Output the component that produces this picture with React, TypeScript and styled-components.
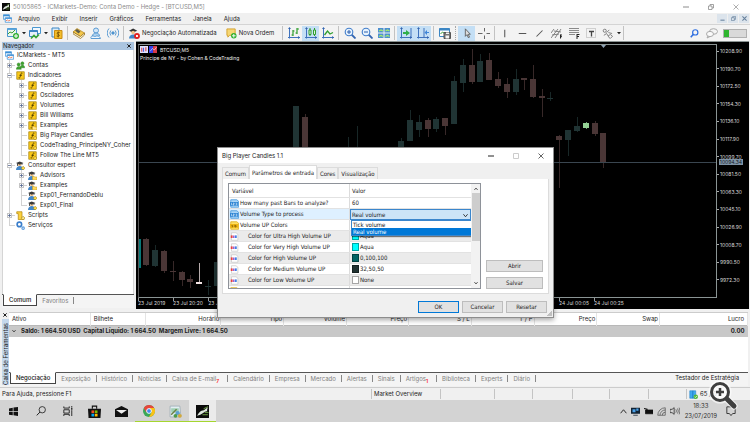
import React from 'react';
import styled, { createGlobalStyle, css } from 'styled-components';

const UI = `Inter, "Open Sans", sans-serif`;
const DLG = `"DejaVu Sans Condensed", "DejaVu Sans", sans-serif`;

const Global = createGlobalStyle`
  * { box-sizing: border-box; }
  body { margin: 0; background: #f0f0f0; font: 6px/10px ${UI}; color: #1c1c1c; }
  button, select { font: inherit; color: inherit; margin: 0; padding: 0; border: 0; background: none; }
  ul { list-style: none; margin: 0; padding: 0; }
  svg { display: block; flex: none; }
`;

/* ---------- frame ---------- */
const Desktop = styled.div`
  position: relative;
  display: flex;
  flex-direction: column;
  min-height: 100vh;
  overflow: hidden;
`;
const TitleBar = styled.header`
  display: flex;
  align-items: center;
  gap: 3px;
  height: 13px;
  padding: 0 2px;
  background: #fff;
  color: #8c8c8c;
`;
const TitleText = styled.h1`
  flex: 1;
  margin: 0;
  font-size: inherit;
  font-weight: 400;
`;
const WindowButtons = styled.div`
  display: flex;
`;
const CaptionButton = styled.button<{ $dark?: boolean; $faint?: boolean }>`
  display: grid;
  place-items: center;
  width: 25px;
  height: 12px;
  color: ${(p) => (p.$faint ? '#ccc' : p.$dark ? '#222' : '#8c8c8c')};
`;
const MenuBar = styled.nav`
  display: flex;
  align-items: center;
  gap: 12px;
  height: 11px;
  padding: 0 1px 0 3px;
  background: #f0f0f0;
`;
const MenuIcon = styled.span`
  width: 10px;
  margin-right: -7px;
`;
const MenuItem = styled.button``;
const MdiControls = styled.div`
  display: flex;
  gap: 1px;
  margin-left: auto;
`;
const MdiButton = styled.button`
  display: grid;
  place-items: center;
  width: 10px;
  height: 9px;
  background: #dce4ec;
  color: #67809c;
`;
const Toolbar = styled.div`
  display: flex;
  align-items: center;
  height: 17px;
  padding: 0 3px 0 4px;
  background: #f3f3f3;
  border-top: 1px solid #d4d4d4;
`;
const ToolButton = styled.button<{ $on?: boolean }>`
  display: grid;
  place-items: center;
  width: 17px;
  height: 15px;
  flex: none;
  background: ${(p) => (p.$on ? '#c4dff5' : 'transparent')};
`;
const ArrowButton = styled.button`
  display: grid;
  place-items: center;
  width: 5px;
  height: 15px;
`;
const TextButton = styled.button`
  display: flex;
  align-items: center;
  gap: 2px;
  padding: 0 6px 0 3px;
  white-space: nowrap;
`;
const Separator = styled.span<{ $grip?: boolean }>`
  width: 1px;
  height: 14px;
  margin: 0 2px;
  ${(p) => (p.$grip ? 'border-left: 1px dotted #a8a8a8;' : 'background: #c2c2c2;')}
`;
const ToolbarEnd = styled.div`
  display: flex;
  align-items: center;
  margin-left: auto;
`;
const Battery = styled.span`
  width: 24px;
  height: 9px;
  margin-left: 3px;
  border: 1px solid #b0b0b0;
  background: linear-gradient(90deg, #2fb52f 5px, #d9d9d9 5px);
`;

/* ---------- navigator ---------- */
const Main = styled.main`
  display: flex;
  flex: 1;
`;
const Navigator = styled.aside`
  display: flex;
  flex-direction: column;
  flex: none;
  width: 136px;
  padding: 1px 2px 0 2px;
  background: #f0f0f0;
`;
const PanelTitle = styled.div`
  display: flex;
  justify-content: space-between;
  align-items: center;
  height: 8px;
  padding: 0 2px 0 1px;
  background: #abc5e0;
  line-height: 8px;
`;
const CloseButton = styled.button`
  display: grid;
  place-items: center;
  width: 6px;
  height: 6px;
`;
const Tree = styled.ul`
  flex: 1;
  padding-left: 2px;
  background: #fff;
  border-left: 1px solid #d5d5d5;
  border-right: 1px solid #d5d5d5;
`;
const Branch = styled.ul<{ $root?: boolean }>`
  margin-left: ${(p) => (p.$root ? 4 : 12)}px;
`;
const Node = styled.li`
  position: relative;
  &::before {
    content: '';
    position: absolute;
    left: 0;
    top: 0;
    bottom: 0;
    border-left: 1px solid #d2d2d2;
  }
  &:last-child::before {
    bottom: auto;
    height: 5px;
  }
`;
const NodeRow = styled.div<{ $child?: boolean }>`
  position: relative;
  display: flex;
  align-items: center;
  gap: 3px;
  height: 10px;
  overflow: hidden;
  white-space: nowrap;
  ${(p) =>
    p.$child &&
    css`
      margin-left: -2px;
      &::before {
        content: '';
        width: 6px;
        margin-left: 2px;
        margin-right: -2px;
        border-top: 1px solid #d2d2d2;
      }
    `}
`;
const ToggleHolder = styled.span`
  position: absolute;
  left: -2px;
  top: 0;
`;
const Toggle = styled.button`
  position: absolute;
  left: 0;
  top: 3px;
  display: grid;
  place-items: center;
  width: 5px;
  height: 5px;
  background: #fff;
  color: #4a5d8a;
  outline: 1px solid #c5c5c5;
  outline-offset: -1px;
`;
const SheetTabs = styled.div`
  display: flex;
  align-items: flex-start;
  height: 14px;
  margin-bottom: 1px;
  border-top: 1px solid #555;
  background: #f4f4f4;
  color: #808080;
`;
const SheetTab = styled.button<{ $on?: boolean }>`
  height: 12px;
  padding: 0 5px;
  white-space: nowrap;
  ${(p) =>
    p.$on &&
    css`
      margin-top: -1px;
      margin-left: 1px;
      background: #fff;
      color: #111;
      border: 1px solid #444;
      border-top-color: #fff;
      font-weight: 500;
    `}
`;
const TabRule = styled.span`
  height: 7px;
  margin-top: 2px;
  border-left: 1px solid #888;
`;
const Count = styled.sub`
  padding-right: 3px;
  color: #f22;
  font-size: 5px;
  font-weight: 600;
  line-height: 5px;
`;

/* ---------- chart ---------- */
const ChartPane = styled.section`
  position: relative;
  display: grid;
  grid-template-columns: 1fr 32px;
  grid-template-rows: 1fr 11px;
  flex: 1;
  margin-right: 1px;
  padding: 2px 0 0 2px;
  background: #000;
  border-top: 1px solid #8b9392;
  color: #d8d8d8;
  font-size: 5px;
  line-height: 6px;
`;
const Plot = styled.div`
  position: relative;
  border: 1px solid #8a9494;
  border-left-color: #555;
  overflow: hidden;
`;
const PlotCaption = styled.div`
  position: absolute;
  left: 1px;
  top: 1px;
  display: grid;
  gap: 2px;
  color: #eee;
`;
const Symbol = styled.div`
  display: flex;
  align-items: center;
  gap: 1px;
`;
const SymbolText = styled.span`
  padding-left: 2px;
`;
const PriceAxis = styled.div`
  display: flex;
  flex-direction: column;
  justify-content: space-between;
  padding: 4px 0 15px;
`;
const Price = styled.span`
  display: flex;
  align-items: center;
  gap: 1px;
  &::before {
    content: '';
    width: 2px;
    border-top: 1px solid #aaa;
  }
`;
const CurrentPrice = styled.output`
  position: absolute;
  right: 6px;
  top: 117px;
  padding: 0 1px;
  background: #7f93a6;
  color: #10181f;
`;
const TimeAxis = styled.div`
  display: grid;
  grid-template-columns: repeat(14, 6.06%);
  white-space: nowrap;
`;
const Time = styled.span`
  position: relative;
  padding-top: 2px;
  &::before {
    content: '';
    position: absolute;
    left: 0;
    top: 0;
    height: 3px;
    border-left: 1px solid #999;
  }
`;

/* ---------- toolbox ---------- */
const Toolbox = styled.section`
  display: flex;
  height: 78px;
  padding: 3px 2px 0 1px;
  background: #f0f0f0;
`;
const ToolboxGrip = styled.div`
  display: flex;
  flex-direction: column;
  align-items: center;
  width: 8px;
`;
const ToolboxName = styled.span`
  flex: 1;
  width: 7px;
  margin: 1px 0 2px;
  background: #c4d8ec;
  writing-mode: vertical-rl;
  transform: rotate(180deg);
  line-height: 7px;
  white-space: nowrap;
`;
const ToolboxBody = styled.div`
  display: flex;
  flex-direction: column;
  flex: 1;
  border-top: 1px solid #ccc;
`;
const TableArea = styled.div`
  flex: 1;
  background: #fff;
`;
const Positions = styled.table`
  width: 100%;
  table-layout: fixed;
  border-collapse: collapse;
`;
const HeadCell = styled.th<{ $w: number; $left?: boolean }>`
  width: ${(p) => p.$w}%;
  height: 12px;
  padding: 0 1px 0 3px;
  font-weight: 400;
  text-align: ${(p) => (p.$left ? 'left' : 'right')};
  border-right: 1px solid #e4e4e4;
  &:last-child {
    padding-right: 3px;
  }
`;
const BalanceCell = styled.td<{ $right?: boolean }>`
  height: 12px;
  padding: 0 3px;
  background: #c8c8c8;
  border-top: 1px solid #b8b8b8;
  font-weight: 700;
  white-space: pre;
  text-align: ${(p) => (p.$right ? 'right' : 'left')};
`;
const Balance = styled.span`
  display: flex;
  align-items: center;
  gap: 5px;
`;
const Tester = styled.a`
  margin-left: auto;
  padding-right: 9px;
  color: #222;
  text-decoration: none;
`;

/* ---------- status and taskbar ---------- */
const StatusBar = styled.footer`
  display: grid;
  grid-template-columns: 371fr 69fr 54fr 38fr 40fr 37fr 39fr 38fr 64fr;
  height: 13px;
  padding: 1px 0;
  border-top: 1px solid #ccc;
  background: #f0f0f0;
`;
const StatusCell = styled.span<{ $first?: boolean }>`
  display: flex;
  align-items: center;
  gap: 2px;
  padding-left: 2px;
  border-left: ${(p) => (p.$first ? 0 : 1)}px solid #c4c4c4;
  white-space: nowrap;
`;
const Taskbar = styled.footer`
  display: flex;
  height: 22px;
  background: #d3d3d3;
`;
const TaskButton = styled.button<{ $state?: 'open' | 'active' }>`
  display: grid;
  place-items: center;
  width: 27px;
  border-bottom: 1px solid ${(p) => (p.$state ? '#a5d62f' : 'transparent')};
  border-top: 1px solid transparent;
  background: ${(p) => (p.$state === 'active' ? '#ebebeb' : 'transparent')};
`;
const Tray = styled.div`
  display: flex;
  align-items: center;
  gap: 4px;
  margin-left: auto;
  padding-right: 14px;
`;
const Clock = styled.time`
  padding: 0 5px 0 1px;
  text-align: center;
  white-space: pre;
  color: #333;
`;
const Magnifier = styled.button`
  position: absolute;
  right: 12px;
  bottom: 12px;
`;

/* ---------- dialog ---------- */
const Dialog = styled.section`
  position: absolute;
  left: 217px;
  top: 147px;
  width: 337px;
  background: #f0f0f0;
  border: 1px solid #8d8d8d;
  box-shadow: 0 2px 5px rgba(0, 0, 0, 0.35);
  font-family: ${DLG};
`;
const DialogTitle = styled.div`
  display: flex;
  align-items: center;
  height: 15px;
  padding-left: 4px;
  background: #fff;
  font-family: ${UI};
`;
const DialogBody = styled.div`
  padding: 2px 4px 4px;
`;
const DialogTabs = styled.div`
  display: flex;
  align-items: flex-end;
`;
const DialogTab = styled.button<{ $on?: boolean }>`
  height: ${(p) => (p.$on ? 14 : 12)}px;
  padding: 0 2px;
  border: 1px solid #dcdcdc;
  border-bottom: 0;
  background: ${(p) => (p.$on ? '#fff' : '#f0f0f0')};
`;
const Page = styled.div`
  display: flex;
  gap: 5px;
  padding: 4px 5px;
  background: #fff;
  border: 1px solid #dcdcdc;
  border-top: 0;
`;
const ListBox = styled.div`
  display: flex;
  flex: 1;
  height: 106px;
  border: 1px solid #8e9299;
`;
const Params = styled.div`
  flex: 1;
  overflow: hidden;
`;
const ParamRow = styled.div<{ $tone?: 'head' | 'picked' | 'alt' }>`
  position: relative;
  display: grid;
  grid-template-columns: 1fr 1fr;
  height: ${(p) => (p.$tone === 'head' ? 14 : 11)}px;
  align-items: stretch;
  background: ${(p) => (p.$tone === 'picked' ? '#def0ff' : p.$tone === 'alt' ? '#ebebeb' : '#fff')};
  border-bottom: 1px solid #e2e2e2;
`;
const NameCell = styled.span<{ $head?: boolean }>`
  display: flex;
  align-items: center;
  gap: 1px;
  padding-left: ${(p) => (p.$head ? 3 : 1)}px;
  border-right: 1px solid #dcdcdc;
  white-space: nowrap;
`;
const Indented = styled.span`
  padding-left: 8px;
`;
const ValueCell = styled.span`
  display: flex;
  align-items: center;
  gap: 1px;
  padding-left: 2px;
`;
const Swatch = styled.i<{ $c: string }>`
  width: 7px;
  height: 8px;
  background: ${(p) => p.$c};
  border: 1px solid rgba(0, 0, 0, 0.35);
`;
const Combo = styled.div`
  position: relative;
  display: flex;
  margin-bottom: -1px;
  background: #cce4f7;
  border: 1px solid #3b86cc;
  & > svg {
    position: absolute;
    right: 2px;
    top: 3px;
  }
`;
const ComboSelect = styled.select`
  appearance: none;
  width: 100%;
  padding: 0 1px;
  line-height: 9px;
`;
const Options = styled.ul`
  position: absolute;
  z-index: 1;
  right: -1px;
  top: 11px;
  width: 50%;
  background: #fff;
  border: 1px solid #3b86cc;
  box-shadow: 1px 1px 1px rgba(0, 0, 0, 0.5);
`;
const Option = styled.li<{ $on?: boolean }>`
  padding-left: 1px;
  line-height: 7px;
  height: 7px;
  background: ${(p) => (p.$on ? '#0078d7' : '#fff')};
  color: ${(p) => (p.$on ? '#fff' : '#111')};
`;
const ScrollBar = styled.div`
  display: flex;
  flex-direction: column;
  align-items: center;
  gap: 2px;
  width: 9px;
  padding: 3px 0;
  background: #f2f2f2;
`;
const Thumb = styled.span`
  width: 8px;
  height: 48px;
  margin-bottom: auto;
  background: #cdcdcd;
`;
const SideButtons = styled.div`
  display: flex;
  flex-direction: column;
  justify-content: flex-end;
  gap: 5px;
  width: 57px;
`;
const PushButton = styled.button<{ $default?: boolean }>`
  height: 12px;
  min-width: 41px;
  background: #e1e1e1;
  border: 1px solid ${(p) => (p.$default ? '#0078d7' : '#bdbdbd')};
`;
const Actions = styled.div`
  display: flex;
  justify-content: flex-end;
  gap: 3px;
  padding: 7px 2px 0 0;
`;
const Grip = styled.span`
  position: absolute;
  right: 1px;
  bottom: 1px;
  width: 5px;
  height: 5px;
  background: linear-gradient(135deg, transparent 50%, #c0c0c0 50%);
`;

/* ---------- icons ---------- */
type IconProps = { s?: number; w?: number; children: React.ReactNode };
const Icon = ({ s = 11, w, children }: IconProps) => (
  <svg width={w ?? s} height={s} viewBox={`0 0 ${w ? (w * 12) / s : 12} 12`} fill="none" stroke="currentColor" aria-hidden="true">
    {children}
  </svg>
);
const Cross = ({ s = 6, sw = 1.4 }: { s?: number; sw?: number }) => (
  <Icon s={s}><path d="M1 1l10 10M11 1L1 11" strokeWidth={sw} /></Icon>
);
const Down = ({ s = 4 }: { s?: number }) => (
  <Icon s={s}><path d="M0 3h12L6 10z" fill="#222" stroke="none" /></Icon>
);
const Chevron = ({ up, s = 5 }: { up?: boolean; s?: number }) => (
  <Icon s={s}><path d={up ? 'M1 9l5-6 5 6' : 'M1 3l5 6 5-6'} strokeWidth="2" /></Icon>
);
const MinIcon = () => <Icon s={6}><path d="M0 6h12" strokeWidth="2" /></Icon>;
const MaxIcon = () => <Icon s={6}><path d="M1 1h10v10H1z" strokeWidth="2" /></Icon>;
const RestoreIcon = ({ s = 6 }: { s?: number }) => (
  <Icon s={s}><path d="M1 4h7v7H1zM4 4V1h7v7H8" strokeWidth="1.6" /></Icon>
);
const Mt5Icon = ({ s = 8 }: { s?: number }) => (
  <Icon s={s}>
    <path d="M0 0h12v12H0z" fill="#0a0a0a" stroke="none" />
    <path d="M1 10c1-2 3-5 5-5 2 0 3-2 5-3-1 3-1 3 0 4-3-1-5 3-10 4z" fill="#dfe8df" stroke="none" />
    <path d="M7 3.500l4-2M8 7h3.500M6 9h5" stroke="#78b54a" strokeWidth=".8" />
  </Icon>
);
const WindowsIcon = ({ s = 9 }: { s?: number }) => (
  <Icon s={s}>
    <path d="M.5 1h8v6h-8z" fill="#e9f4fd" stroke="#3c8fd6" />
    <path d="M.5 1h8v2h-8z" fill="#3c8fd6" stroke="none" />
    <path d="M3 5h8.500v6H3z" fill="#fff" stroke="#3c8fd6" />
    <path d="M3 5h8.500v1.500H3z" fill="#3c8fd6" stroke="none" />
    <path d="M4 9l2-1 1.500 1L10 8" stroke="#e0603a" />
  </Icon>
);
const PlusBadge = ({ x = 9, y = 9 }: { x?: number; y?: number }) => (
  <>
    <circle cx={x} cy={y} r="3" fill="#2fae2f" stroke="none" />
    <path d={`M${x - 2} ${y}h4M${x} ${y - 2}v4`} stroke="#fff" />
  </>
);
const NewChart = () => (
  <Icon s={12}>
    <path d="M.5 1.500h9v8h-9z" fill="#eaf7ea" stroke="#4a97cf" />
    <path d="M.5 1.500h9V3h-9z" fill="#5ba6dd" stroke="none" />
    <path d="M1 7l2-2 2 1 3-3" stroke="#3aa03a" />
    <PlusBadge />
  </Icon>
);
const Profiles = () => (
  <Icon s={12}>
    <path d="M3.500.5h8v6h-8z" fill="#f1f8fe" stroke="#4a97cf" />
    <path d="M.5 3.500h8v6h-8z" fill="#e6f1fb" stroke="#3c86c4" />
    <path d="M.5 3.500h8V5h-8z" fill="#3c86c4" stroke="none" />
    <path d="M2 11.500l3-3 2 2 3-3" stroke="#37a637" strokeWidth="1.600" />
  </Icon>
);
const MarketWatch = () => (
  <Icon s={12}>
    <path d="M1 1h7v9H1z" fill="#d9ecfa" stroke="#3c86c4" />
    <path d="M3.500 3.500h7.500v8H3.500z" fill="#f3bd2a" stroke="#c98c12" />
    <path d="M8.700 5.500c-3-1-3 1.500-1.400 2s1.400 2.500-1.600 1.500M7.200 4.500v6" stroke="#6b4700" strokeWidth=".8" />
  </Icon>
);
const BookIcon = () => (
  <Icon s={12}>
    <path d="M0 5l4-3.500L11.500 6 7.500 9.500z" fill="#f3c649" stroke="#b5851b" strokeWidth=".7" />
    <path d="M0 5v1.800l7.500 4.700L11.500 8V6L7.500 9.500z" fill="#fff3cf" stroke="#8a6510" strokeWidth=".7" />
    <path d="M2 3.500l3.500 3 2-2L4 2z" fill="#5c5c4c" stroke="none" />
  </Icon>
);
const CloudUser = () => (
  <Icon s={12}>
    <circle cx="6" cy="3.500" r="2.500" fill="#d3e7f8" stroke="#5b9bd3" />
    <path d="M2.500 9c0-4 7-4 7 0" fill="#a9cfee" stroke="#5b9bd3" />
    <path d="M1 11.500c-1-3 3-3 4-1.500 1-2 5-1 5.500 1.500z" fill="#eef6fd" stroke="#5b9bd3" />
  </Icon>
);
const Signal = () => (
  <Icon s={12}>
    <g stroke="#4d93cf">
      <circle cx="6" cy="6" r="1.200" fill="#4d93cf" />
      <path d="M3.800 3.500a4 4 0 000 5M8.200 3.500a4 4 0 010 5M2 1.500a6.500 6.500 0 000 9M10 1.500a6.500 6.500 0 010 9" strokeWidth=".9" />
    </g>
  </Icon>
);
const AutoTrade = () => (
  <Icon s={11}>
    <path d="M0 3l4.500-2.500L9 3 4.500 5z" fill="#333" stroke="none" />
    <circle cx="4.500" cy="5" r="2" fill="#f0c48a" stroke="none" />
    <path d="M0 11.500c0-6 9-6 9 0z" fill="#3f86c8" stroke="none" />
    <circle cx="8.700" cy="8.700" r="3.200" fill="#e02020" stroke="none" />
    <path d="M7.700 7.700h2v2h-2z" fill="#fff" stroke="none" />
  </Icon>
);
const NewOrder = () => (
  <Icon s={11}>
    <path d="M1 1h9v7H4l-2 2V8H1z" fill="#f7d774" stroke="#d1a02c" />
    <PlusBadge x={8.5} y={8.5} />
  </Icon>
);
const Axes = ({ children }: { children: React.ReactNode }) => (
  <Icon s={12}>
    <path d="M1.500 1v10.500M0 10.500h12" stroke="#3f72bd" />
    <path d="M0 2l1.500-2L3 2zM10 9l2 1.500-2 1.500z" fill="#3465b0" stroke="none" />
    {children}
  </Icon>
);
const ZoomGlass = ({ plus }: { plus?: boolean }) => (
  <Icon s={12}>
    <path d="M7.500 7.500l4 4" stroke="#3465b0" strokeWidth="1.800" />
    <circle cx="5" cy="5" r="3.800" fill="#e8f3fd" stroke="#3f7ccb" strokeWidth="1.100" />
    <path d={plus ? 'M3 5h4M5 3v4' : 'M3 5h4'} stroke="#2b5fae" />
  </Icon>
);
const TileIcon = () => (
  <Icon s={12}>
    <path d="M0 1h5.500v4.500H0zM6.500 1H12v4.500H6.500zM0 6.500h5.500V11H0zM6.500 6.500H12V11H6.500z" fill="#4d8fd0" stroke="none" />
    <path d="M1 4l2-1 2 1M7.500 4l2-1 2 1M1 9.500l2-1 2 1M7.500 9.500l2-1 2 1" stroke="#a6ef6a" strokeWidth="1.200" />
  </Icon>
);
const TemplateIcon = () => (
  <Icon s={12}>
    <path d="M.5 1.500h10v8H.5z" fill="#fff" stroke="#3c86c4" />
    <path d="M.5 1.500h10v2H.5z" fill="#3c86c4" stroke="none" />
    <path d="M1.500 7l2-2 2 1.500" stroke="#39a039" />
    <path d="M5 5.500h6.500v6H5z" fill="#777" stroke="#555" />
    <path d="M6.500 8.500h3.500v3H6.500zM7 5.500h3v1.500H7z" fill="#f2f2f2" stroke="none" />
  </Icon>
);
const FxIcon = ({ badge }: { badge?: 'folder' | 'leaf' }) => (
  <Icon s={9}>
    <path d="M1 1h10v10H1z" fill="#fbc918" stroke="#a88514" />
    <path d="M8.500 3C6.500 2 6.500 4 6 6s-.5 4-2.500 3M4.500 5.700h3.500" stroke="#3d3000" strokeWidth="1.100" />
    {badge === 'folder' && <path d="M6 7h2l1 1h3v4H6z" fill="#ffe58a" stroke="#c79a1b" strokeWidth=".7" />}
    {badge === 'leaf' && <path d="M9.500 7l2.500 2.500L9.500 12 7 9.500z" fill="#ffdd4a" stroke="#9a7a12" strokeWidth=".8" />}
  </Icon>
);
const ExpertIcon = ({ badge }: { badge?: 'folder' | 'leaf' }) => (
  <Icon s={9}>
    <circle cx="5" cy="5" r="2.300" fill="#efc08a" stroke="none" />
    <path d="M0 2.500L5 .5l5 2-5 2.500z" fill="#3a3a3a" stroke="none" />
    <path d="M2 3v3.500M8 3v2" stroke="#3a3a3a" strokeWidth="1.200" />
    <path d="M0 12c0-7 10-7 10 0z" fill="#4287c9" stroke="none" />
    {badge === 'folder' && <path d="M6 7h2l1 1h3v4H6z" fill="#ffd95e" stroke="#c79a1b" strokeWidth=".7" />}
    {badge !== 'folder' && <path d="M9.500 7l2.500 2.500L9.500 12 7 9.500z" fill="#ffdd4a" stroke="#9a7a12" strokeWidth=".8" />}
  </Icon>
);
const AccountsIcon = () => (
  <Icon s={9}>
    <g fill="#3fa52f" stroke="#2b7a20" strokeWidth=".6">
      <circle cx="8.500" cy="3" r="2" /><path d="M5.500 9c0-5 6-5 6 0z" />
      <circle cx="3.500" cy="4.500" r="2" /><path d="M.5 11c0-5 6.500-5 6.500 0z" />
    </g>
  </Icon>
);
const ScriptIcon = () => (
  <Icon s={9}>
    <path d="M1 1h7v8h2.500v2.500H3V3.500H1z" fill="#fcd13c" stroke="#b68a14" />
    <path d="M9.500 7l2.500 2.500L9.500 12 7 9.500z" fill="#ffe88a" stroke="#9a7a12" strokeWidth=".8" />
  </Icon>
);
const GearsIcon = () => (
  <Icon s={9}>
    <circle cx="4.500" cy="4.500" r="3" stroke="#3b7ecb" strokeWidth="2.200" />
    <circle cx="9.500" cy="9.500" r="1.600" stroke="#5a9ade" strokeWidth="1.600" />
  </Icon>
);
const ParamIcon = ({ kind }: { kind: 'int' | 'text' | 'color' }) => (
  <Icon s={9}>
    {kind === 'int' && (
      <>
        <path d="M1 1h8l2.500 2v8H1z" fill="#a9d5f7" stroke="#3d92d8" />
        <path d="M0 4h11v5H0z" fill="#2e86d4" stroke="none" />
        <path d="M2 5v3M4 5.500h1.500v1.300H4v1.200h1.600M7.500 5.500H9v2.500H7.500" stroke="#fff" strokeWidth=".7" />
      </>
    )}
    {kind === 'text' && (
      <>
        <path d="M1 1h8l2.500 2v8H1z" fill="#ffdf62" stroke="#dba80f" />
        <path d="M0 4h11v5H0z" fill="#efb512" stroke="none" />
        <path d="M2 6h1.500v2H2.200M6.500 5v3h1.600V6.200H6.500" stroke="#6b4d00" strokeWidth=".8" />
      </>
    )}
    {kind === 'color' && (
      <>
        <path d="M2 1h6l2.500 2v8H2z" fill="#fff" stroke="#c9c9c9" />
        <path d="M1 4.500h2.500v3.500H1z" fill="#e64040" stroke="none" />
        <path d="M4 4.500h2v3.500H4z" fill="#a060d0" stroke="none" />
        <path d="M6.500 4.500H9v3.500H6.500z" fill="#4080e6" stroke="none" />
      </>
    )}
  </Icon>
);

/* ---------- data ---------- */
const menu = ['Arquivo', 'Exibir', 'Inserir', 'Gráficos', 'Ferramentas', 'Janela', 'Ajuda'];

type Item = { name: string; icon: React.ReactNode; state?: '+' | '-'; kids?: Item[] };
const tree: Item[] = [
  { name: 'Contas', icon: <AccountsIcon />, state: '+' },
  {
    name: 'Indicadores', icon: <FxIcon />, state: '-', kids: [
      { name: 'Tendência', icon: <FxIcon />, state: '+' },
      { name: 'Osciladores', icon: <FxIcon />, state: '+' },
      { name: 'Volumes', icon: <FxIcon />, state: '+' },
      { name: 'Bill Williams', icon: <FxIcon />, state: '+' },
      { name: 'Examples', icon: <FxIcon badge="folder" />, state: '+' },
      { name: 'Big Player Candles', icon: <FxIcon badge="leaf" /> },
      { name: 'CodeTrading_PrincipeNY_Coher', icon: <FxIcon badge="leaf" /> },
      { name: 'Follow The Line MT5', icon: <FxIcon badge="leaf" /> },
    ],
  },
  {
    name: 'Consultor expert', icon: <ExpertIcon />, state: '-', kids: [
      { name: 'Advisors', icon: <ExpertIcon badge="folder" />, state: '+' },
      { name: 'Examples', icon: <ExpertIcon badge="folder" />, state: '+' },
      { name: 'Exp01_FernandoDeblu', icon: <ExpertIcon badge="leaf" /> },
      { name: 'Exp01_Final', icon: <ExpertIcon badge="leaf" /> },
    ],
  },
  { name: 'Scripts', icon: <ScriptIcon />, state: '+' },
  { name: 'Serviços', icon: <GearsIcon /> },
];

const UPC = '#203434';
const DNC = '#4a3636';
/* centre, wick top, body top, body bottom, wick bottom, colour */
const candles: [number, number, number, number, number, string][] = [
  [138, 239, 239, 268, 268, '#087878'], [146, 238, 239, 265, 266, DNC], [155, 245, 250, 266, 267, UPC],
  [164, 250, 251, 271, 273, DNC], [173, 261, 271, 272, 281, DNC], [182, 271, 272, 280, 286, DNC],
  [190, 275, 279, 282, 288, DNC], [199, 263, 282, 284, 284, '#f3e4e4'], [208, 280, 286, 287, 295, UPC],
  [217, 255, 262, 286, 286, UPC], [296, 106, 106, 160, 160, UPC], [305, 114, 117, 160, 160, DNC],
  [348, 137, 150, 160, 160, UPC], [357, 126, 150, 160, 160, UPC], [401, 138, 141, 160, 160, UPC],
  [410, 110, 120, 141, 141, UPC], [419, 115, 122, 130, 137, UPC], [428, 118, 120, 129, 137, DNC],
  [436, 117, 119, 129, 132, UPC], [445, 118, 118, 126, 135, DNC], [454, 76, 81, 124, 124, UPC],
  [463, 59, 65, 83, 92, UPC], [472, 49, 65, 82, 84, DNC], [480, 54, 61, 82, 82, UPC],
  [489, 53, 60, 80, 80, DNC], [498, 72, 79, 86, 88, DNC], [507, 78, 84, 92, 98, DNC],
  [516, 69, 79, 92, 95, UPC], [524, 78, 78, 80, 90, DNC], [533, 65, 79, 97, 98, DNC],
  [542, 89, 96, 98, 117, DNC], [550, 92, 98, 99, 101, UPC], [559, 135, 136, 140, 188, DNC],
  [568, 130, 130, 140, 156, UPC], [577, 117, 126, 131, 132, UPC], [586, 122, 123, 128, 129, '#93cf93'],
  [595, 121, 123, 134, 136, DNC], [603, 133, 133, 162, 168, DNC],
];
const prices = ['10208.90', '10190.70', '10172.50', '10154.30', '10136.10', '10117.90', '10099.70', '10081.50', '10063.30', '10045.10', '10026.90', '10008.70', '9990.50', '9972.30'];
const times = ['23 Jul 2019', '23 Jul 20:20', '23 Jul 20:40', '23 Jul 21:00', '23 Jul 21:20', '23 Jul 21:40', '23 Jul 22:00', '23 Jul 22:20', '23 Jul 22:40', '23 Jul 23:00', '23 Jul 23:20', '23 Jul 23:40', '24 Jul 00:05', '24 Jul 00:25'];

const columns: [string, number][] = [['Ativo', 11], ['Bilhete', 7.5], ['Horário', 10.2], ['Tipo', 8.5], ['Volume', 8.5], ['Preço', 8.4], ['S / L', 8.5], ['T / P', 8.5], ['Preço', 8.5], ['Swap', 8.5], ['Lucro', 11.9]];
const sheets: [string, string?][] = [['Exposição'], ['Histórico'], ['Notícias'], ['Caixa de E-mail', '7'], ['Calendário'], ['Empresa'], ['Mercado'], ['Alertas'], ['Sinais'], ['Artigos', '1'], ['Biblioteca'], ['Experts'], ['Diário']];
const colors: [string, string, string][] = [
  ['Color for Ultra High Volume UP', '#00ffff', 'Aqua'],
  ['Color for Very High Volume UP', '#00ffff', 'Aqua'],
  ['Color for High Volume UP', '#006464', '0,100,100'],
  ['Color for Medium Volume UP', '#203232', '32,50,50'],
  ['Color for Low Volume UP', '#ffffff', 'None'],
];

const ToggleBox = ({ sign, name }: { sign: '+' | '-'; name: string }) => (
  <ToggleHolder>
    <Toggle aria-label={name}>
      <Icon s={3}><path d={sign === '+' ? 'M0 6h12M6 0v12' : 'M0 6h12'} strokeWidth="3" /></Icon>
    </Toggle>
  </ToggleHolder>
);
const TreeNode = ({ item }: { item: Item }) => (
  <Node>
    <NodeRow $child>
      {item.icon}
      {item.name}
    </NodeRow>
    {item.state && <ToggleBox sign={item.state} name={item.name} />}
    {item.kids && <Branch>{item.kids.map((k) => <TreeNode key={k.name} item={k} />)}</Branch>}
  </Node>
);

const Tools = () => (
  <Toolbar>
    <ToolButton aria-label="Novo gráfico"><NewChart /></ToolButton>
    <ArrowButton aria-label="Gráficos"><Down /></ArrowButton>
    <ToolButton aria-label="Perfis"><Profiles /></ToolButton>
    <ArrowButton aria-label="Lista de perfis"><Down /></ArrowButton>
    <ToolButton aria-label="Observação do mercado"><MarketWatch /></ToolButton>
    <Separator />
    <ToolButton aria-label="Biblioteca"><BookIcon /></ToolButton>
    <ToolButton aria-label="Conta"><CloudUser /></ToolButton>
    <ToolButton aria-label="Sinais"><Signal /></ToolButton>
    <Separator />
    <TextButton><AutoTrade />Negociação Automatizada</TextButton>
    <TextButton><NewOrder />Nova Ordem</TextButton>
    <Separator />
    <ToolButton aria-label="Barras"><Axes><path d="M5 3v6M3.500 8H5M5 4h1.500M9 1v6M7.500 6H9M9 2h2" stroke="#2f9e2f" strokeWidth="1.200" /></Axes></ToolButton>
    <ToolButton $on aria-label="Velas"><Axes><path d="M5 1v8M9.500 1v8" stroke="#2f9e2f" /><path d="M4 3h2v4.500H4zM8.500 3h2v4.500h-2z" fill="#dff5df" stroke="#2f9e2f" /></Axes></ToolButton>
    <ToolButton aria-label="Linha"><Axes><path d="M2.500 8l3-4 2.500 3 3-1.500" stroke="#2f9e2f" strokeWidth="1.300" /></Axes></ToolButton>
    <Separator />
    <ToolButton aria-label="Ampliar"><ZoomGlass plus /></ToolButton>
    <ToolButton aria-label="Reduzir"><ZoomGlass /></ToolButton>
    <ToolButton aria-label="Organizar janelas"><TileIcon /></ToolButton>
    <Separator />
    <ToolButton $on aria-label="Rolagem automática"><Axes><path d="M11 1v9" stroke="#3f72bd" /><path d="M3 5h3V3l4 3-4 3V7H3z" fill="#2fae4a" stroke="none" /></Axes></ToolButton>
    <ToolButton $on aria-label="Deslocar gráfico"><Axes><path d="M7 1v9" stroke="#3f72bd" /><path d="M12 5h-2V3L7.500 5.500 10 8V6h2z" fill="#3f86d8" stroke="none" /></Axes></ToolButton>
    <Separator />
    <ToolButton aria-label="Modelos"><TemplateIcon /></ToolButton>
    <Separator $grip />
    <ToolButton $on aria-label="Cursor"><Icon s={10}><path d="M4 1v9l2-2 1.500 3.500L9 11 7.500 7.500H10z" fill="#ddd" stroke="#555" /></Icon></ToolButton>
    <ToolButton aria-label="Mira"><Icon s={12}><path d="M0 6.500h4.500M8.500 6.500H12M6.500 1v3.500M6.500 8.500V12" stroke="#666" /></Icon></ToolButton>
    <Separator />
    <ToolButton aria-label="Linha vertical"><Icon s={9}><path d="M5 1v10" stroke="#555" strokeWidth="1.400" /></Icon></ToolButton>
    <ToolButton aria-label="Linha horizontal"><Icon s={9}><path d="M1 6h10" stroke="#555" strokeWidth="1.400" /></Icon></ToolButton>
    <ToolButton aria-label="Linha de tendência"><Icon s={9}><path d="M2 10l8-8" stroke="#555" strokeWidth="1.400" /></Icon></ToolButton>
    <ToolButton aria-label="Canal"><Icon s={12}><path d="M0 11L7 2M4 11l6-9M0 6l3-4M1 8l7-1M3 4l7 1" stroke="#777" strokeWidth=".9" /><path d="M9.500 7.500v4M9.500 8H11M9.500 9.700H11" stroke="#222" /></Icon></ToolButton>
    <ToolButton aria-label="Fibonacci"><Icon s={12}><path d="M1 1.500h10M1 3.500h10M1 5.500h10M1 7.500h6" stroke="#8a8a8a" /><path d="M9 7v5M9 7.500h2.500M9 9.500h2" stroke="#222" /></Icon></ToolButton>
    <ToolButton aria-label="Texto"><Icon s={12}><path d="M1.500 1.500h9v9h-9z" stroke="#aaa" strokeDasharray="1 1" /><path d="M4 4.500h5M6.500 4V9.500" stroke="#444" strokeWidth="1.300" /></Icon></ToolButton>
    <ToolButton aria-label="Objetos"><Icon s={11}><circle cx="3" cy="3" r="1.700" stroke="#777" /><path d="M5 5l3-3M2 8l3-2 2 3M7 5l4 1" stroke="#777" /><path d="M9 7l2.500 2L9 11.500 6.500 9z" stroke="#777" /></Icon></ToolButton>
    <ArrowButton aria-label="Mais objetos"><Down /></ArrowButton>
    <Separator />
    <ToolbarEnd>
      <ToolButton aria-label="Pesquisar"><Icon s={9}><circle cx="7" cy="4.500" r="3.500" stroke="#2f6fe0" strokeWidth="1.600" /><path d="M4.500 7L1 11" stroke="#2f6fe0" strokeWidth="2" /></Icon></ToolButton>
      <ToolButton aria-label="Conversas"><Icon s={12}><ellipse cx="7.500" cy="4.500" rx="4" ry="2.800" fill="#f5f5f5" stroke="#aaa" /><ellipse cx="4" cy="7" rx="3.500" ry="2.600" fill="#fafafa" stroke="#aaa" /><path d="M2 9l-1 2 3-1.500" stroke="#aaa" /></Icon></ToolButton>
      <Battery />
    </ToolbarEnd>
  </Toolbar>
);

const Chart = () => (
  <ChartPane>
    <Plot>
      <svg width="578" height="252" viewBox="139 45 578 252">
        {candles.map(([x, wt, bt, bb, wb, c]) => (
          <g key={x} fill={c}>
            <rect x={x} y={wt} width="1" height={wb - wt} opacity=".75" />
            <rect x={x - 3} y={bt} width="6" height={bb - bt} />
          </g>
        ))}
        <path d="M139 162.500h578" stroke="#3a4650" />
        <path d="M601 45h5l-2.500 3z" fill="#8fa3b5" />
      </svg>
      <PlotCaption>
        <Symbol>
          <Icon s={7} w={8}><path d="M0 0h14v12H0z" fill="#dfe3ff" stroke="none" /><path d="M3 3v7M10 2v7" stroke="#e05050" strokeWidth="2" /><path d="M6 3v7" stroke="#5060e0" strokeWidth="2" /></Icon>
          <Icon s={7} w={8}><path d="M0 0h7v12H0z" fill="#3340e8" stroke="none" /><path d="M7 0h7v12H7z" fill="#d83a4a" stroke="none" /><path d="M2 9l4-5 3 3 4-5" stroke="#fff" /></Icon>
          <SymbolText>BTCUSD,M5</SymbolText>
        </Symbol>
        <span>Príncipe de NY - by Cohen &amp; CodeTrading</span>
      </PlotCaption>
    </Plot>
    <PriceAxis>{prices.map((p) => <Price key={p}>{p}</Price>)}</PriceAxis>
    <TimeAxis>{times.map((t) => <Time key={t}>{t}</Time>)}</TimeAxis>
    <CurrentPrice>10094.34</CurrentPrice>
  </ChartPane>
);

const ParamsDialog = () => (
  <Dialog role="dialog" aria-label="Big Player Candles 1.1">
    <DialogTitle>
      <TitleText>Big Player Candles 1.1</TitleText>
      <CaptionButton $dark aria-label="Minimizar"><MinIcon /></CaptionButton>
      <CaptionButton $faint aria-label="Maximizar"><MaxIcon /></CaptionButton>
      <CaptionButton $dark aria-label="Fechar"><Cross /></CaptionButton>
    </DialogTitle>
    <DialogBody>
      <DialogTabs>
        <DialogTab>Comum</DialogTab>
        <DialogTab $on>Parâmetros de entrada</DialogTab>
        <DialogTab>Cores</DialogTab>
        <DialogTab>Visualização</DialogTab>
      </DialogTabs>
      <Page>
        <ListBox>
          <Params>
            <ParamRow $tone="head">
              <NameCell $head>Variável</NameCell>
              <ValueCell>Valor</ValueCell>
            </ParamRow>
            <ParamRow>
              <NameCell><ParamIcon kind="int" />How many past Bars to analyze?</NameCell>
              <ValueCell>60</ValueCell>
            </ParamRow>
            <ParamRow $tone="picked">
              <NameCell as="label" htmlFor="volume-type"><ParamIcon kind="int" />Volume Type to process</NameCell>
              <Combo>
                <ComboSelect id="volume-type" defaultValue="Real volume">
                  <option>Tick volume</option>
                  <option>Real volume</option>
                </ComboSelect>
                <Chevron />
              </Combo>
              <Options>
                <Option>Tick volume</Option>
                <Option $on>Real volume</Option>
              </Options>
            </ParamRow>
            <ParamRow>
              <NameCell><ParamIcon kind="text" />Volume UP Colors</NameCell>
            </ParamRow>
            {colors.map(([name, c, v], i) => (
              <ParamRow key={name} $tone={i % 2 ? undefined : 'alt'}>
                <NameCell><ParamIcon kind="color" /><Indented>{name}</Indented></NameCell>
                <ValueCell><Swatch $c={c} />{v}</ValueCell>
              </ParamRow>
            ))}
            <ParamRow>
              <NameCell><ParamIcon kind="text" /></NameCell>
            </ParamRow>
          </Params>
          <ScrollBar><Chevron up s={4} /><Thumb /><Chevron s={4} /></ScrollBar>
        </ListBox>
        <SideButtons>
          <PushButton>Abrir</PushButton>
          <PushButton>Salvar</PushButton>
        </SideButtons>
      </Page>
      <Actions>
        <PushButton $default>OK</PushButton>
        <PushButton>Cancelar</PushButton>
        <PushButton>Resetar</PushButton>
      </Actions>
    </DialogBody>
    <Grip />
  </Dialog>
);

export default function App() {
  return (
    <Desktop>
      <Global />
      <TitleBar>
        <Mt5Icon />
        <TitleText>50105865 - ICMarkets-Demo: Conta Demo - Hedge - [BTCUSD,M5]</TitleText>
        <WindowButtons>
          <CaptionButton aria-label="Minimizar"><MinIcon /></CaptionButton>
          <CaptionButton aria-label="Restaurar"><RestoreIcon /></CaptionButton>
          <CaptionButton aria-label="Fechar"><Cross /></CaptionButton>
        </WindowButtons>
      </TitleBar>
      <MenuBar>
        <MenuIcon><WindowsIcon /></MenuIcon>
        {menu.map((m) => <MenuItem key={m}>{m}</MenuItem>)}
        <MdiControls>
          <MdiButton aria-label="Minimizar gráfico"><Icon s={5}><path d="M1 10h10" strokeWidth="2.500" /></Icon></MdiButton>
          <MdiButton aria-label="Restaurar gráfico"><RestoreIcon s={5} /></MdiButton>
          <MdiButton aria-label="Fechar gráfico"><Cross s={5} sw={2.5} /></MdiButton>
        </MdiControls>
      </MenuBar>
      <Tools />
      <Main>
        <Navigator>
          <PanelTitle>Navegador<CloseButton aria-label="Fechar navegador"><Cross s={4} sw={3} /></CloseButton></PanelTitle>
          <Tree>
            <li>
              <NodeRow><WindowsIcon />ICMarkets - MT5</NodeRow>
              <Branch $root>{tree.map((t) => <TreeNode key={t.name} item={t} />)}</Branch>
            </li>
          </Tree>
          <SheetTabs>
            <SheetTab $on>Comum</SheetTab>
            <SheetTab>Favoritos</SheetTab>
            <TabRule />
          </SheetTabs>
        </Navigator>
        <Chart />
      </Main>
      <Toolbox>
        <ToolboxGrip>
          <CloseButton aria-label="Fechar caixa"><Cross s={4} sw={3} /></CloseButton>
          <ToolboxName>Caixa de Ferramentas</ToolboxName>
        </ToolboxGrip>
        <ToolboxBody>
          <TableArea>
            <Positions>
              <thead>
                <tr>{columns.map(([c, w], i) => <HeadCell key={i} $w={w} $left={i < 2}>{c}</HeadCell>)}</tr>
              </thead>
              <tbody>
                <tr>
                  <BalanceCell colSpan={10}>
                    <Balance><Chevron s={4} />{'Saldo: 1 664.50 USD  Capital Líquido: 1 664.50  Margem Livre: 1 664.50'}</Balance>
                  </BalanceCell>
                  <BalanceCell $right>0.00</BalanceCell>
                </tr>
              </tbody>
            </Positions>
          </TableArea>
          <SheetTabs>
            <SheetTab $on>Negociação</SheetTab>
            {sheets.map(([s, n]) => (
              <React.Fragment key={s}>
                <SheetTab>{s}{n && <Count>{n}</Count>}</SheetTab>
                <TabRule />
              </React.Fragment>
            ))}
            <Tester href="#tester">Testador de Estratégia</Tester>
          </SheetTabs>
        </ToolboxBody>
      </Toolbox>
      <StatusBar>
        <StatusCell $first>Para Ajuda, pressione F1</StatusCell>
        <StatusCell>Market Overview</StatusCell>
        <StatusCell /><StatusCell /><StatusCell /><StatusCell /><StatusCell /><StatusCell />
        <StatusCell>
          <Icon s={9}><path d="M1 1h4v10H1zM5 1h4v10H5z" fill="#3fa9f0" stroke="#1d7cc4" strokeWidth=".7" /><circle cx="9" cy="9" r="3" fill="#4fb83a" stroke="none" /><path d="M7.500 9l1 1 2-2" stroke="#fff" /></Icon>
          65 / 0
        </StatusCell>
      </StatusBar>
      <Taskbar>
        <TaskButton aria-label="Iniciar"><Icon s={9}><path d="M0 2l5-1v4.700H0zM6 .8L12 0v5.700H6zM0 6.500h5V11l-5-.8zM6 6.500h6V12l-6-.9z" fill="#111" stroke="none" /></Icon></TaskButton>
        <TaskButton aria-label="Pesquisar"><Icon s={10}><circle cx="7.500" cy="4.500" r="3.800" stroke="#222" /><path d="M4.800 7.300L.8 11.300" stroke="#222" strokeWidth="1.200" /></Icon></TaskButton>
        <TaskButton aria-label="Visão de tarefas"><Icon s={10}><path d="M1 .5V2.500h6.500V.5M1 4.500h6.500v4H1zM1 12v-2h6.500v2M10.500 0v2M10.500 5v7" stroke="#222" strokeWidth="1.100" /><path d="M9.700 2.500h1.600v2H9.700z" fill="#222" stroke="none" /></Icon></TaskButton>
        <TaskButton aria-label="Loja"><Icon s={13}><path d="M0 3.500h12L11.500 12H.5z" fill="#111" stroke="none" /><path d="M4 3.500V1h4v2.500" stroke="#111" /><path d="M3.200 5h2.500v2.500H3.200z" fill="#f04e23" stroke="none" /><path d="M6.300 5h2.500v2.500H6.300z" fill="#7fba00" stroke="none" /><path d="M3.200 8.100h2.500v2.500H3.200z" fill="#00a4ef" stroke="none" /><path d="M6.300 8.100h2.500v2.500H6.300z" fill="#ffb900" stroke="none" /></Icon></TaskButton>
        <TaskButton aria-label="E-mail"><Icon s={13}><path d="M0 4l6-3 6 3v7H0z" fill="#111" stroke="none" /><path d="M1 4.500h10L6 8z" fill="#eee" stroke="none" /></Icon></TaskButton>
        <TaskButton $state="open" aria-label="Chrome">
          <Icon s={12}>
            <circle cx="6" cy="6" r="6" fill="#3aa757" stroke="none" />
            <path d="M.8 3A6 6 0 0111.200 3H6L3.400 7.500z" fill="#e8453c" stroke="none" />
            <path d="M11.200 3A6 6 0 016 12l2.600-4.500L6 3z" fill="#fbc116" stroke="none" />
            <circle cx="6" cy="6" r="2.400" fill="#4688f1" stroke="#fff" strokeWidth=".9" />
          </Icon>
        </TaskButton>
        <TaskButton $state="open" aria-label="Imagens"><Icon s={13}><path d="M1 1h9l1 10H1z" fill="#e4eef2" stroke="#98a8b0" strokeWidth=".7" /><path d="M2 3h7v4H2z" fill="#9fd0b5" stroke="none" /><path d="M2 9l5-5" stroke="#6c7f45" strokeWidth="1.300" /><circle cx="8" cy="7.500" r="2" fill="#5d9fd0" stroke="none" /><circle cx="6" cy="10" r="1.800" fill="#4c9a4a" stroke="none" /><circle cx="10" cy="10" r="1.800" fill="#d3a93a" stroke="none" /></Icon></TaskButton>
        <TaskButton $state="active" aria-label="MetaTrader 5"><Mt5Icon s={13} /></TaskButton>
        <Tray>
          <Icon s={7}><path d="M1 9l5-6 5 6" stroke="#222" strokeWidth="1.600" /></Icon>
          <Icon s={9}><path d="M0 1h12v8H0z" fill="#123" stroke="none" /><path d="M2 3h4v4H2zM7 2h3v3H7z" fill="#4aa0e8" stroke="none" /><path d="M3 11h6" stroke="#123" /></Icon>
          <Icon s={9}><path d="M2 4h10v5H2z" fill="#111" stroke="#111" /><path d="M0 2l4 1v3" stroke="#111" strokeWidth="1.500" /></Icon>
          <Icon s={9}><path d="M1 11A10 10 0 0111 1v10zM4 11a7 7 0 017-7M7 11a4 4 0 014-4" stroke="#555" /></Icon>
          <Icon s={10}><path d="M0 4h2.500L5 2v8L2.500 8H0z" stroke="#222" strokeWidth=".9" /><path d="M7 4q1.500 2 0 4M9 3q2 3 0 6M11 2q2 4 0 8" stroke="#444" strokeWidth=".8" /></Icon>
          <Clock>{'18:33\n23/07/2019'}</Clock>
          <Icon s={10}><path d="M1 1h10v8H8l-2 2.500L4 9H1z" stroke="#222" /></Icon>
        </Tray>
      </Taskbar>
      <ParamsDialog />
      <Magnifier aria-label="Ampliar imagem">
        <svg width="30" height="30" viewBox="0 0 30 30" fill="none" strokeLinecap="round">
          <path d="M19 19l7 7" stroke="#fff" strokeWidth="7" opacity=".7" />
          <circle cx="12" cy="12" r="9" fill="#fff" stroke="#fff" strokeWidth="5" fillOpacity=".8" strokeOpacity=".6" />
          <circle cx="12" cy="12" r="8.500" stroke="#3f3f3f" strokeWidth="3" />
          <path d="M12 8v8M8 12h8" stroke="#3f3f3f" strokeWidth="2.500" strokeLinecap="butt" />
          <path d="M19 19l7 7" stroke="#3f3f3f" strokeWidth="5" />
        </svg>
      </Magnifier>
    </Desktop>
  );
}
